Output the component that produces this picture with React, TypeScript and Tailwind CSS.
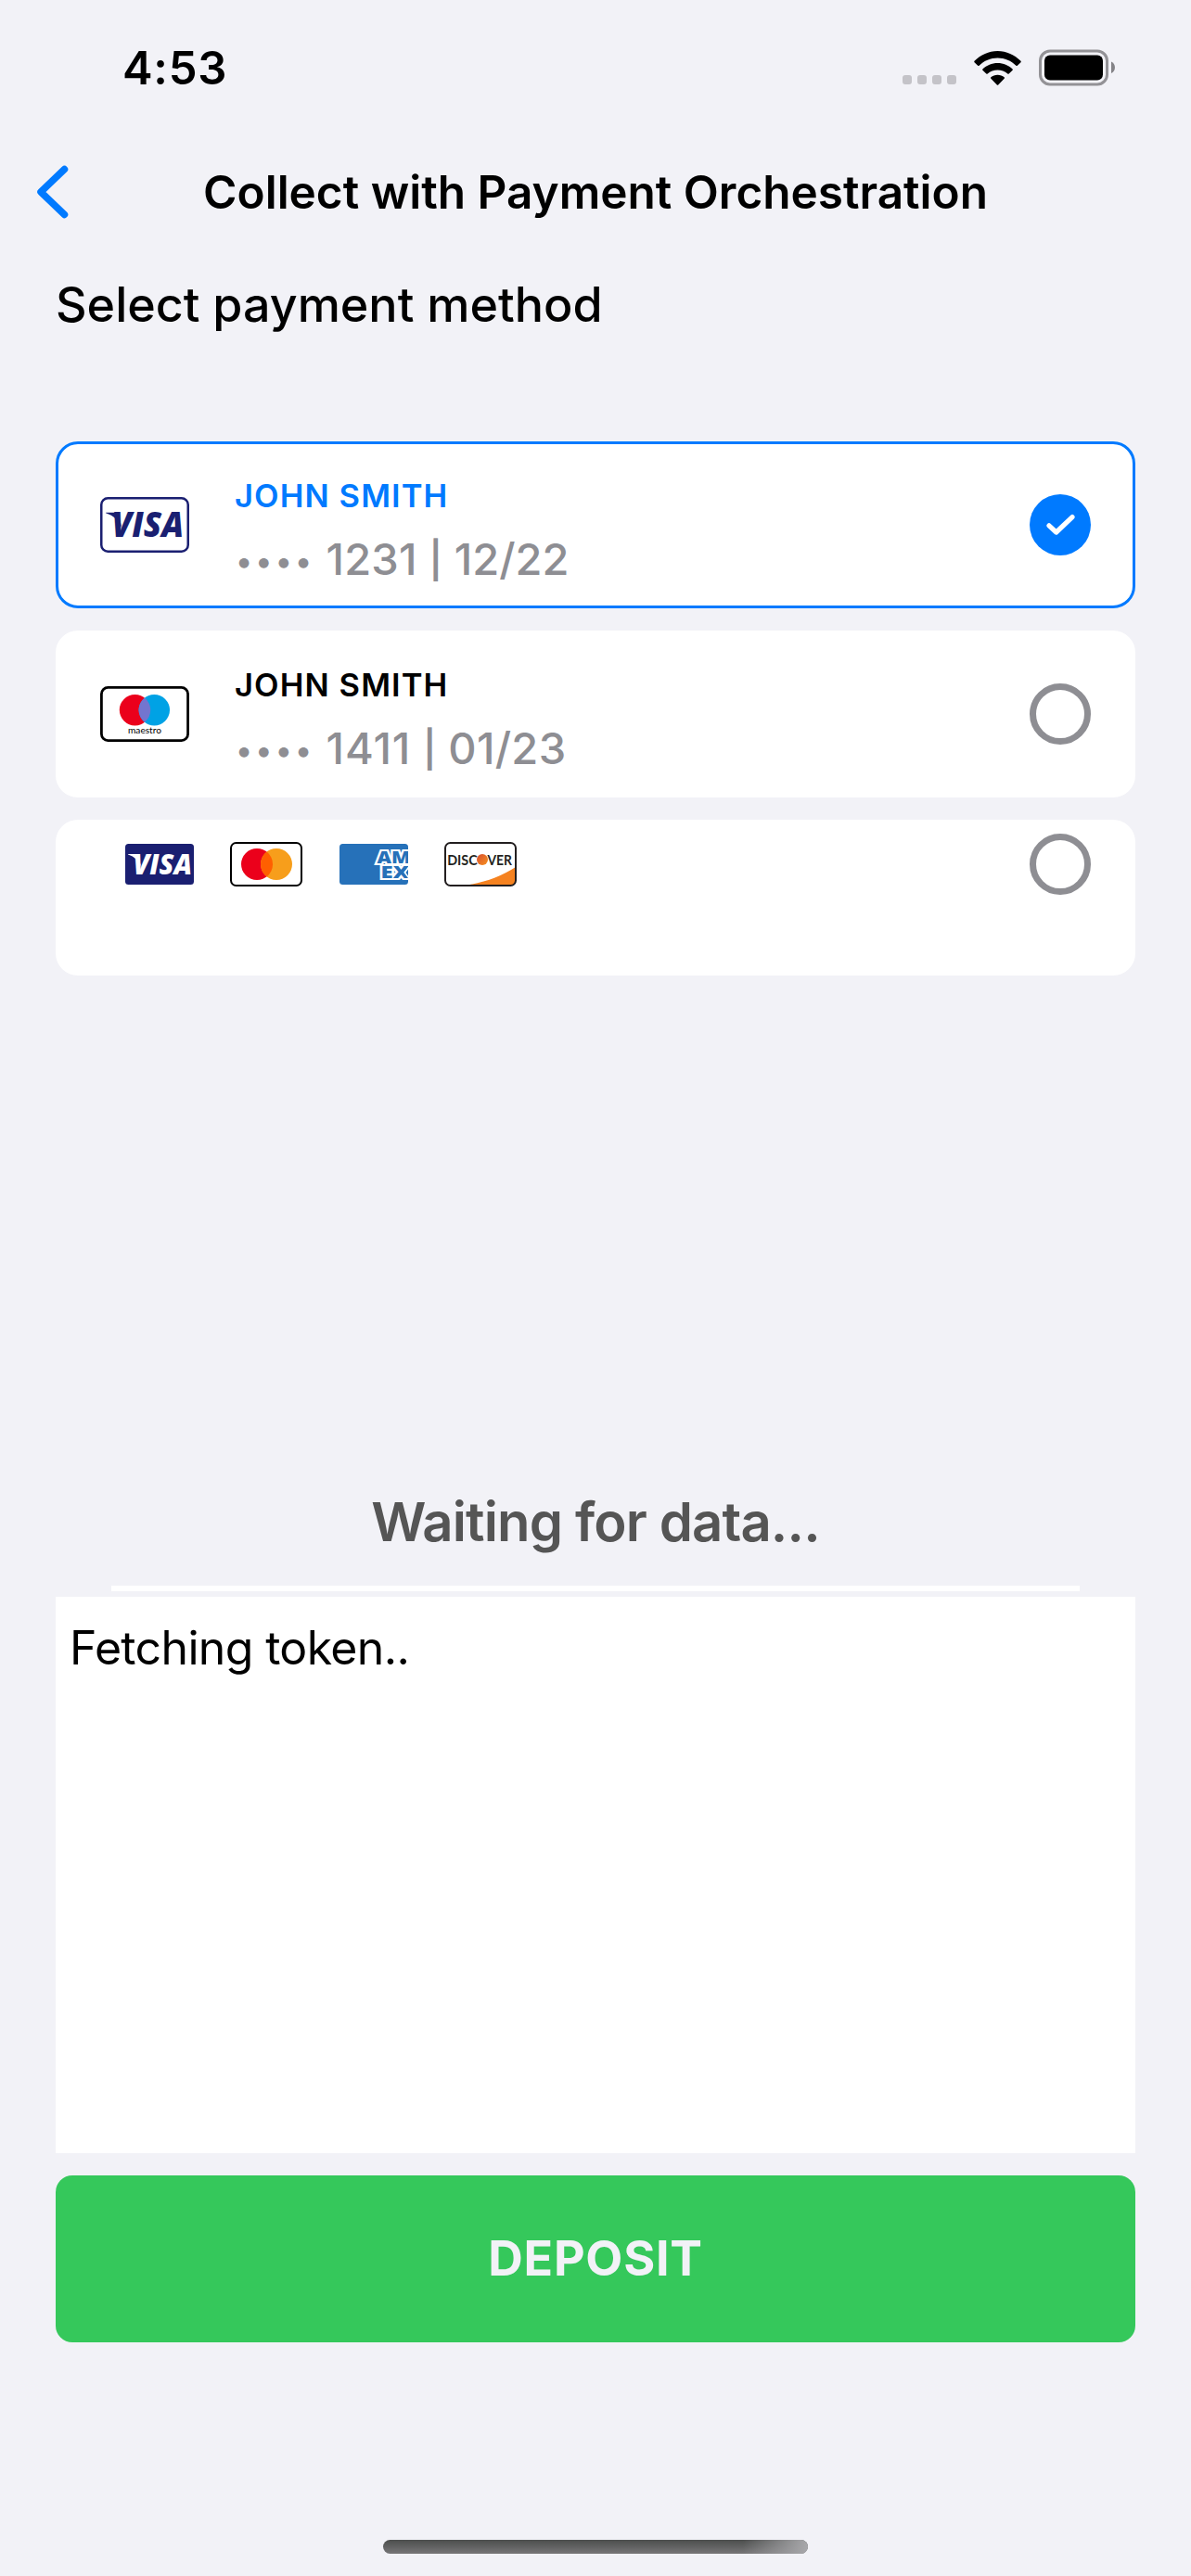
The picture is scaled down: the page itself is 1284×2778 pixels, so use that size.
import type { ReactNode } from 'react'

function StatusBar() {
  return (
    <header className="flex h-[146px] items-center justify-between pr-[81px] pl-[132px]">
      <time className="pt-px text-[49px] font-semibold tracking-[0.7px]">4:53</time>
      <div className="flex items-center">
        <div className="mt-[26px] mr-[19px] flex gap-[6px]">
          {[0, 1, 2, 3].map((dot) => (
            <span key={dot} className="size-[10px] rounded-[3px] bg-[#c4c3c8]" />
          ))}
        </div>
        <svg className="mr-[19px] h-[37px] w-[51px]" viewBox="0 0 51 37" fill="black">
          <path d="M0.5 10.8C7.2 4.1 16 0 25.5 0S43.800 4.100 50.500 10.800C50.900 11.200 50.900 11.800 50.500 12.200L46.800 15.700C46.400 16.100 45.800 16.100 45.400 15.700C40.200 10.600 33.100 7.500 25.500 7.500S10.800 10.600 5.600 15.700C5.200 16.100 4.600 16.100 4.200 15.700L0.500 12.200C0.100 11.800 0.100 11.200 0.500 10.800Z" />
          <path d="M9.400 19.400C13.700 15.400 19.300 12.900 25.500 12.900S37.300 15.400 41.600 19.400C42 19.800 42 20.400 41.600 20.800L37.700 24.500C37.300 24.900 36.700 24.900 36.300 24.500C33.400 21.900 29.600 20.400 25.500 20.400S17.600 21.900 14.700 24.500C14.300 24.900 13.700 24.900 13.300 24.500L9.400 20.800C9 20.400 9 19.800 9.400 19.400Z" />
          <path d="M18.300 28.300C20.200 26.700 22.700 25.700 25.500 25.700S30.800 26.700 32.700 28.300C33.100 28.700 33.100 29.300 32.700 29.700L26.200 36.400C25.800 36.800 25.200 36.800 24.800 36.400L18.300 29.700C17.900 29.300 17.900 28.700 18.300 28.300Z" />
        </svg>
        <svg className="h-[40px] w-[83px]" viewBox="0 0 83 40">
          <rect x="1.500" y="2" width="72" height="36" rx="10.500" fill="none" stroke="#939296" strokeWidth="3" />
          <rect x="6" y="6.500" width="63" height="27" rx="6" fill="black" />
          <path d="M78 13.500C80.500 14.500 82 17 82 19.800S80.500 25 78 26Z" fill="#848387" />
        </svg>
      </div>
    </header>
  )
}

function NavBar() {
  return (
    <nav className="grid h-[122px] grid-cols-[200px_1fr_200px] items-center">
      <button className="flex pl-[38px]" aria-label="Back">
        <svg className="h-[60px] w-[38px]" viewBox="0 0 38 60" fill="none" stroke="#007aff" strokeWidth="7.500" strokeLinecap="round" strokeLinejoin="round">
          <path d="M31.500 5.500L6 30L31.500 54.500" />
        </svg>
      </button>
      <h1 className="text-center text-[49.5px] font-semibold whitespace-nowrap">Collect with Payment Orchestration</h1>
    </nav>
  )
}

const brandFont = { fontFamily: '"Open Sans", sans-serif' }

function VisaOutline() {
  return (
    <svg className="h-[60px] w-[96px]" viewBox="0 0 96 60">
      <rect x="1.250" y="1.250" width="93.500" height="57.500" rx="7" fill="white" stroke="#1a1f71" strokeWidth="2.500" />
      <path d="M6 17.200C6 16.900 6.300 16.800 6.600 16.800H16.500C18.500 16.800 19.700 17.600 20.100 19.500L23.500 34C20.500 25.500 14.500 20 6 17.200Z" fill="#1a1f71" />
      <text x="12.500" y="43" fontSize="36.500" fontWeight="800" fontStyle="italic" textLength="77.500" lengthAdjust="spacingAndGlyphs" fill="#1a1f71" style={brandFont}>VISA</text>
    </svg>
  )
}

function VisaSolid() {
  return (
    <svg className="h-[44px] w-[74px]" viewBox="0 0 74 44">
      <rect width="74" height="44" rx="3.500" fill="#1a1f71" />
      <path d="M3 11.500C3 11.200 3.200 11.100 3.500 11.100H11.500C13.200 11.100 14.100 11.800 14.500 13.300L17 25C14.500 18 10 13.800 3 11.500Z" fill="white" />
      <text x="8.500" y="33" fontSize="30" fontWeight="800" fontStyle="italic" textLength="63.500" lengthAdjust="spacingAndGlyphs" fill="white" style={brandFont}>VISA</text>
    </svg>
  )
}

function Maestro() {
  return (
    <svg className="h-[60px] w-[96px]" viewBox="0 0 96 60">
      <rect x="1.400" y="1.400" width="93.200" height="57.200" rx="7" fill="white" stroke="black" strokeWidth="2.800" />
      <circle cx="37.500" cy="25.700" r="16.700" fill="#eb001b" />
      <circle cx="58.300" cy="25.700" r="16.700" fill="#00a2e5" />
      <path d="M47.900 12.600a16.700 16.700 0 0 1 0 26.200a16.700 16.700 0 0 1 0-26.200Z" fill="#7375cf" />
      <text x="30" y="50.800" fontSize="9.500" fontWeight="400" textLength="36" lengthAdjust="spacingAndGlyphs" fill="black" style={{ fontFamily: 'Lato, sans-serif' }}>maestro</text>
    </svg>
  )
}

function Mastercard() {
  return (
    <svg className="h-[48px] w-[78px]" viewBox="0 0 78 48">
      <rect x="1" y="1" width="76" height="46" rx="5.500" fill="white" stroke="black" strokeWidth="2" />
      <circle cx="29" cy="24" r="17" fill="#eb001b" />
      <circle cx="50" cy="24" r="17" fill="#f79e1b" />
      <path d="M39.500 10.600a17 17 0 0 1 0 26.800a17 17 0 0 1 0-26.800Z" fill="#ff5f00" />
    </svg>
  )
}

function Amex() {
  return (
    <svg className="h-[44px] w-[74px]" viewBox="0 0 74 44">
      <clipPath id="amex-card">
        <rect width="74" height="44" rx="3.500" />
      </clipPath>
      <g clipPath="url(#amex-card)">
        <rect width="74" height="44" fill="#2671b9" />
        <g fill="#2671b9" stroke="white" strokeWidth="4" strokeLinejoin="miter" paintOrder="stroke" fontSize="17.500" fontWeight="800" fontFamily='"Open Sans", sans-serif'>
          <text x="40.500" y="21.300" textLength="36" lengthAdjust="spacingAndGlyphs">AM</text>
          <text x="44.500" y="37" textLength="30.500" lengthAdjust="spacingAndGlyphs">EX</text>
        </g>
        <path d="M75 25L70.500 31L75 37Z" fill="#2671b9" stroke="white" strokeWidth="1.500" />
      </g>
    </svg>
  )
}

function Discover() {
  return (
    <svg className="h-[48px] w-[78px]" viewBox="0 0 78 48">
      <defs>
        <linearGradient id="discover-dot" x1="0" y1="0" x2="1" y2="1">
          <stop offset="0.200" stopColor="#dd5a2b" />
          <stop offset="1" stopColor="#f6921e" />
        </linearGradient>
      </defs>
      <rect x="1" y="1" width="76" height="46" rx="5.500" fill="white" />
      <path d="M26 46.200C46 43 62 36.500 77 27V41.500C77 44.500 75 46.200 72 46.200Z" fill="#f58220" />
      <rect x="1" y="1" width="76" height="46" rx="5.500" fill="none" stroke="#231f20" strokeWidth="2" />
      <g fill="#231f20" fontSize="16" fontWeight="700" fontFamily="Lato, sans-serif">
        <text x="3.200" y="25" textLength="32.500" lengthAdjust="spacingAndGlyphs">DISC</text>
        <text x="46.500" y="25" textLength="26.500" lengthAdjust="spacingAndGlyphs">VER</text>
      </g>
      <circle cx="41" cy="19" r="6" fill="url(#discover-dot)" />
    </svg>
  )
}

function Radio({ checked = false }: { checked?: boolean }) {
  if (!checked) return <span className="size-[66px] shrink-0 rounded-full border-[7px] border-[#8e8e93]" />
  return (
    <span className="flex size-[66px] shrink-0 items-center justify-center rounded-full bg-[#007aff]">
      <svg className="h-[24px] w-[31px]" viewBox="0 0 31 24" fill="none" stroke="white" strokeWidth="5.200" strokeLinecap="round" strokeLinejoin="round">
        <path d="M3 12.800L10.700 20L28 3.600" />
      </svg>
    </span>
  )
}

function SavedCard({ icon, name, last4, expiry, selected = false }: { icon: ReactNode; name: string; last4: string; expiry: string; selected?: boolean }) {
  return (
    <li className={`flex h-[180px] items-center rounded-[24px] border-[3px] bg-white px-[45px] ${selected ? 'border-[#007aff]' : 'border-white'}`}>
      {icon}
      <div className="ml-12 flex h-full flex-1 flex-col gap-[16px] pt-[34px]">
        <p className={`pl-px text-[34.5px] leading-[43px] font-semibold tracking-[1.1px] ${selected ? 'text-[#007aff]' : 'text-black'}`}>{name}</p>
        <p className="flex items-start text-[47px] leading-[62px] font-medium text-[#8e8e93]">
          <span className="w-[99.5px] pl-[2px] text-[34px] leading-[65px] tracking-[3.2px]">••••</span>
          <span className={selected ? 'tracking-[0.2px]' : 'tracking-[0.9px]'}>{last4}</span>
          <span className="px-[13px] text-[39px] leading-[64px] font-semibold">|</span>
          <span className={selected ? 'tracking-[0px]' : 'tracking-[0.3px]'}>{expiry}</span>
        </p>
      </div>
      <Radio checked={selected} />
    </li>
  )
}

export default function App() {
  return (
    <div className="flex h-[2778px] w-[1284px] flex-col bg-[#f2f2f7] font-[Inter,sans-serif] text-black">
      <StatusBar />
      <NavBar />
      <main className="flex flex-1 flex-col px-[60px]">
        <h2 className="text-[52px] leading-[122px] font-medium">Select payment method</h2>
        <ul className="mt-[86px] flex flex-col gap-6">
          <SavedCard icon={<VisaOutline />} name="JOHN SMITH" last4="1231" expiry="12/22" selected />
          <SavedCard icon={<Maestro />} name="JOHN SMITH" last4="1411" expiry="01/23" />
          <li className="flex h-[168px] items-start justify-between rounded-[24px] bg-white pt-[15px] pr-12 pl-[75px]">
            <div className="flex h-[66px] items-center">
              <VisaSolid />
              <div className="ml-[39px] flex"><Mastercard /></div>
              <div className="ml-10 flex"><Amex /></div>
              <div className="ml-[39px] flex"><Discover /></div>
            </div>
            <Radio />
          </li>
        </ul>
        <p className="mt-auto text-center text-[58px] leading-[70px] font-semibold tracking-[-0.84px] text-[#555555]">Waiting for data...</p>
        <div className="mx-[60px] mt-[34px] h-[6px] bg-white" />
        <div className="mt-[6px] h-[600px] bg-white px-[15px] pt-[24px]">
          <p className="text-[50px] leading-[62px] tracking-[-0.66px]">Fetching token..</p>
        </div>
        <button className="mt-6 h-[180px] rounded-[18px] bg-[#35c85b] text-[52px] font-bold tracking-[0.74px] text-[#f2f2f7]">DEPOSIT</button>
      </main>
      <footer className="flex h-[252px] items-end justify-center pb-[24px]">
        <div className="relative h-[15px] w-[458px] overflow-hidden rounded-full bg-linear-to-b from-[#4c4e4d] to-[#777678]">
          <div className="absolute inset-y-0 right-0 w-[70px] bg-linear-to-r from-transparent to-[#a8a8ab]" />
        </div>
      </footer>
    </div>
  )
}
